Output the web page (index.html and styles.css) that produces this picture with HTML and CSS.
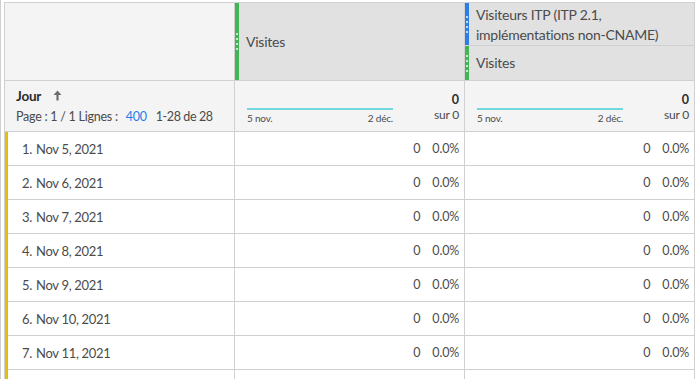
FILE: index.html
```html
<!DOCTYPE html>
<html lang="fr">
<head>
<meta charset="utf-8">
<link rel="stylesheet" href="styles.css">
</head>
<body>
<div class="table">
  <div class="row head">
    <div class="cell hc1"></div>
    <div class="cell hmetric green">
      <span class="bar"><span class="grip"></span></span>
      <span class="htext">Visites</span>
    </div>
    <div class="cell hstack">
      <div class="hsub top blue">
        <span class="bar"><span class="grip"></span></span>
        <span class="htext">Visiteurs ITP (ITP 2.1, implémentations non-CNAME)</span>
      </div>
      <div class="hsub bottom green">
        <span class="bar"><span class="grip"></span></span>
        <span class="htext">Visites</span>
      </div>
    </div>
  </div>
  <div class="row summary">
    <div class="cell sc1">
      <div class="dim">Jour <svg class="arrow" width="9" height="11" viewBox="0 0 9 11"><path d="M4.5 0.5 L8.5 5 L5.6 5 L5.6 10.5 L3.4 10.5 L3.4 5 L0.5 5 Z" fill="#6e6e6e"/></svg></div>
      <div class="pager">Page : 1 / 1 Lignes : <span class="link">400</span> <span class="range">1-28 de 28</span></div>
    </div>
    <div class="cell stot">
      <div class="spark">
        <div class="line"></div>
        <div class="labels"><span>5 nov.</span><span>2 déc.</span></div>
      </div>
      <div class="total"><b>0</b><span>sur 0</span></div>
    </div>
    <div class="cell stot">
      <div class="spark">
        <div class="line"></div>
        <div class="labels"><span>5 nov.</span><span>2 déc.</span></div>
      </div>
      <div class="total"><b>0</b><span>sur 0</span></div>
    </div>
  </div>
  <div class="rows">
    <div class="row item"><div class="cell name"><span class="num">1.</span>Nov 5, 2021</div><div class="cell val"><span>0</span><span class="pct">0.0%</span></div><div class="cell val"><span>0</span><span class="pct">0.0%</span></div></div>
    <div class="row item"><div class="cell name"><span class="num">2.</span>Nov 6, 2021</div><div class="cell val"><span>0</span><span class="pct">0.0%</span></div><div class="cell val"><span>0</span><span class="pct">0.0%</span></div></div>
    <div class="row item"><div class="cell name"><span class="num">3.</span>Nov 7, 2021</div><div class="cell val"><span>0</span><span class="pct">0.0%</span></div><div class="cell val"><span>0</span><span class="pct">0.0%</span></div></div>
    <div class="row item"><div class="cell name"><span class="num">4.</span>Nov 8, 2021</div><div class="cell val"><span>0</span><span class="pct">0.0%</span></div><div class="cell val"><span>0</span><span class="pct">0.0%</span></div></div>
    <div class="row item"><div class="cell name"><span class="num">5.</span>Nov 9, 2021</div><div class="cell val"><span>0</span><span class="pct">0.0%</span></div><div class="cell val"><span>0</span><span class="pct">0.0%</span></div></div>
    <div class="row item"><div class="cell name"><span class="num">6.</span>Nov 10, 2021</div><div class="cell val"><span>0</span><span class="pct">0.0%</span></div><div class="cell val"><span>0</span><span class="pct">0.0%</span></div></div>
    <div class="row item"><div class="cell name"><span class="num">7.</span>Nov 11, 2021</div><div class="cell val"><span>0</span><span class="pct">0.0%</span></div><div class="cell val"><span>0</span><span class="pct">0.0%</span></div></div>
    <div class="row item"><div class="cell name"></div><div class="cell val"></div><div class="cell val"></div></div>
  </div>
</div>
</body>
</html>
```

FILE: styles.css
```css
* { box-sizing: border-box; }
html, body { margin: 0; padding: 0; background: #fff; }
body {
  font-family: Lato, "Open Sans", sans-serif;
  color: #4b4b4b;
  height: 379px;
  overflow: hidden;
  border-left: 1px solid #cfcfcf;
}
.table {
  margin: 2px 0 0 3px;
  width: 691px;
  border: 1px solid #d0d0d0;
  border-bottom: none;
}
.row {
  display: grid;
  grid-template-columns: 230px 230px 229px;
}
.cell { border-right: 1px solid #d0d0d0; }
.cell:last-child { border-right: none; }

/* header */
.head { height: 78px; border-bottom: 1px solid #d0d0d0; }
.hc1 { background: #f4f4f4; }
.hmetric { background: #e1e1e1; display: flex; align-items: stretch; }
.bar {
  width: 4px;
  flex: none;
  display: flex;
  align-items: center;
  justify-content: center;
}
.green .bar { background: #44b556; }
.blue .bar { background: #2d7ee6; }
.grip {
  width: 2px;
  height: 17px;
  background: repeating-linear-gradient(to bottom, rgba(255,255,255,0.7) 0 2px, transparent 2px 5px);
}
.htext {
  align-self: center;
  padding-left: 7px;
  font-size: 14px;
  line-height: 20px;
  letter-spacing: -0.25px;
  color: #4b4b4b;
}
.hstack { display: flex; flex-direction: column; background: #e1e1e1; }
.hsub { display: flex; align-items: stretch; }
.hsub.top { height: 43px; border-bottom: 1px solid #d0d0d0; }
.hsub.top .htext { padding-top: 1px; padding-right: 8px; }
.hsub.bottom { flex: 1; }

/* summary */
.summary { height: 51px; border-bottom: 1px solid #d0d0d0; background: #f4f4f4; }
.sc1 { padding: 6px 0 0 11px; }
.dim {
  display: flex;
  align-items: center;
  font-weight: 700;
  font-size: 13.5px;
  line-height: 18px;
  color: #2c2c2c;
  letter-spacing: -0.2px;
}
.arrow { margin-left: 12px; margin-top: -2px; }
.pager {
  margin-top: 3px;
  font-size: 12.5px;
  line-height: 18px;
  color: #4b4b4b;
  letter-spacing: -0.25px;
  white-space: nowrap;
}
.link { color: #2680eb; margin-left: 5px; margin-right: 6px; }
.range { letter-spacing: -0.4px; }
.stot {
  display: flex;
  align-items: flex-start;
  padding: 11px 5px 0 12px;
}
.spark { width: 146px; padding-top: 16px; }
.line { height: 2px; background: #72d8dd; }
.labels {
  display: flex;
  justify-content: space-between;
  font-size: 10px;
  line-height: 12px;
  margin-top: 2px;
  color: #4b4b4b;
  letter-spacing: -0.2px;
}
.total {
  flex: 1;
  display: flex;
  flex-direction: column;
  align-items: flex-end;
  font-size: 12px;
  line-height: 15px;
}
.total b { font-weight: 700; color: #2c2c2c; font-size: 12.5px; }
.total span { letter-spacing: -0.2px; }

/* rows */
.rows { border-left: 3px solid #e6bf00; }
.item { height: 34px; grid-template-columns: 227px 230px 229px; }
.item .cell { border-bottom: 1px solid #d0d0d0; }
.name {
  display: flex;
  align-items: center;
  font-size: 13px;
  letter-spacing: -0.3px;
  color: #4b4b4b;
  padding-left: 8px;
}
.num { display: inline-block; width: 16px; text-align: right; margin-right: 4px; }
.val {
  display: flex;
  align-items: center;
  justify-content: flex-end;
  font-size: 12.5px;
  padding-right: 5px;
  color: #4b4b4b;
  letter-spacing: -0.2px;
}
.pct { margin-left: 12px; }
```
